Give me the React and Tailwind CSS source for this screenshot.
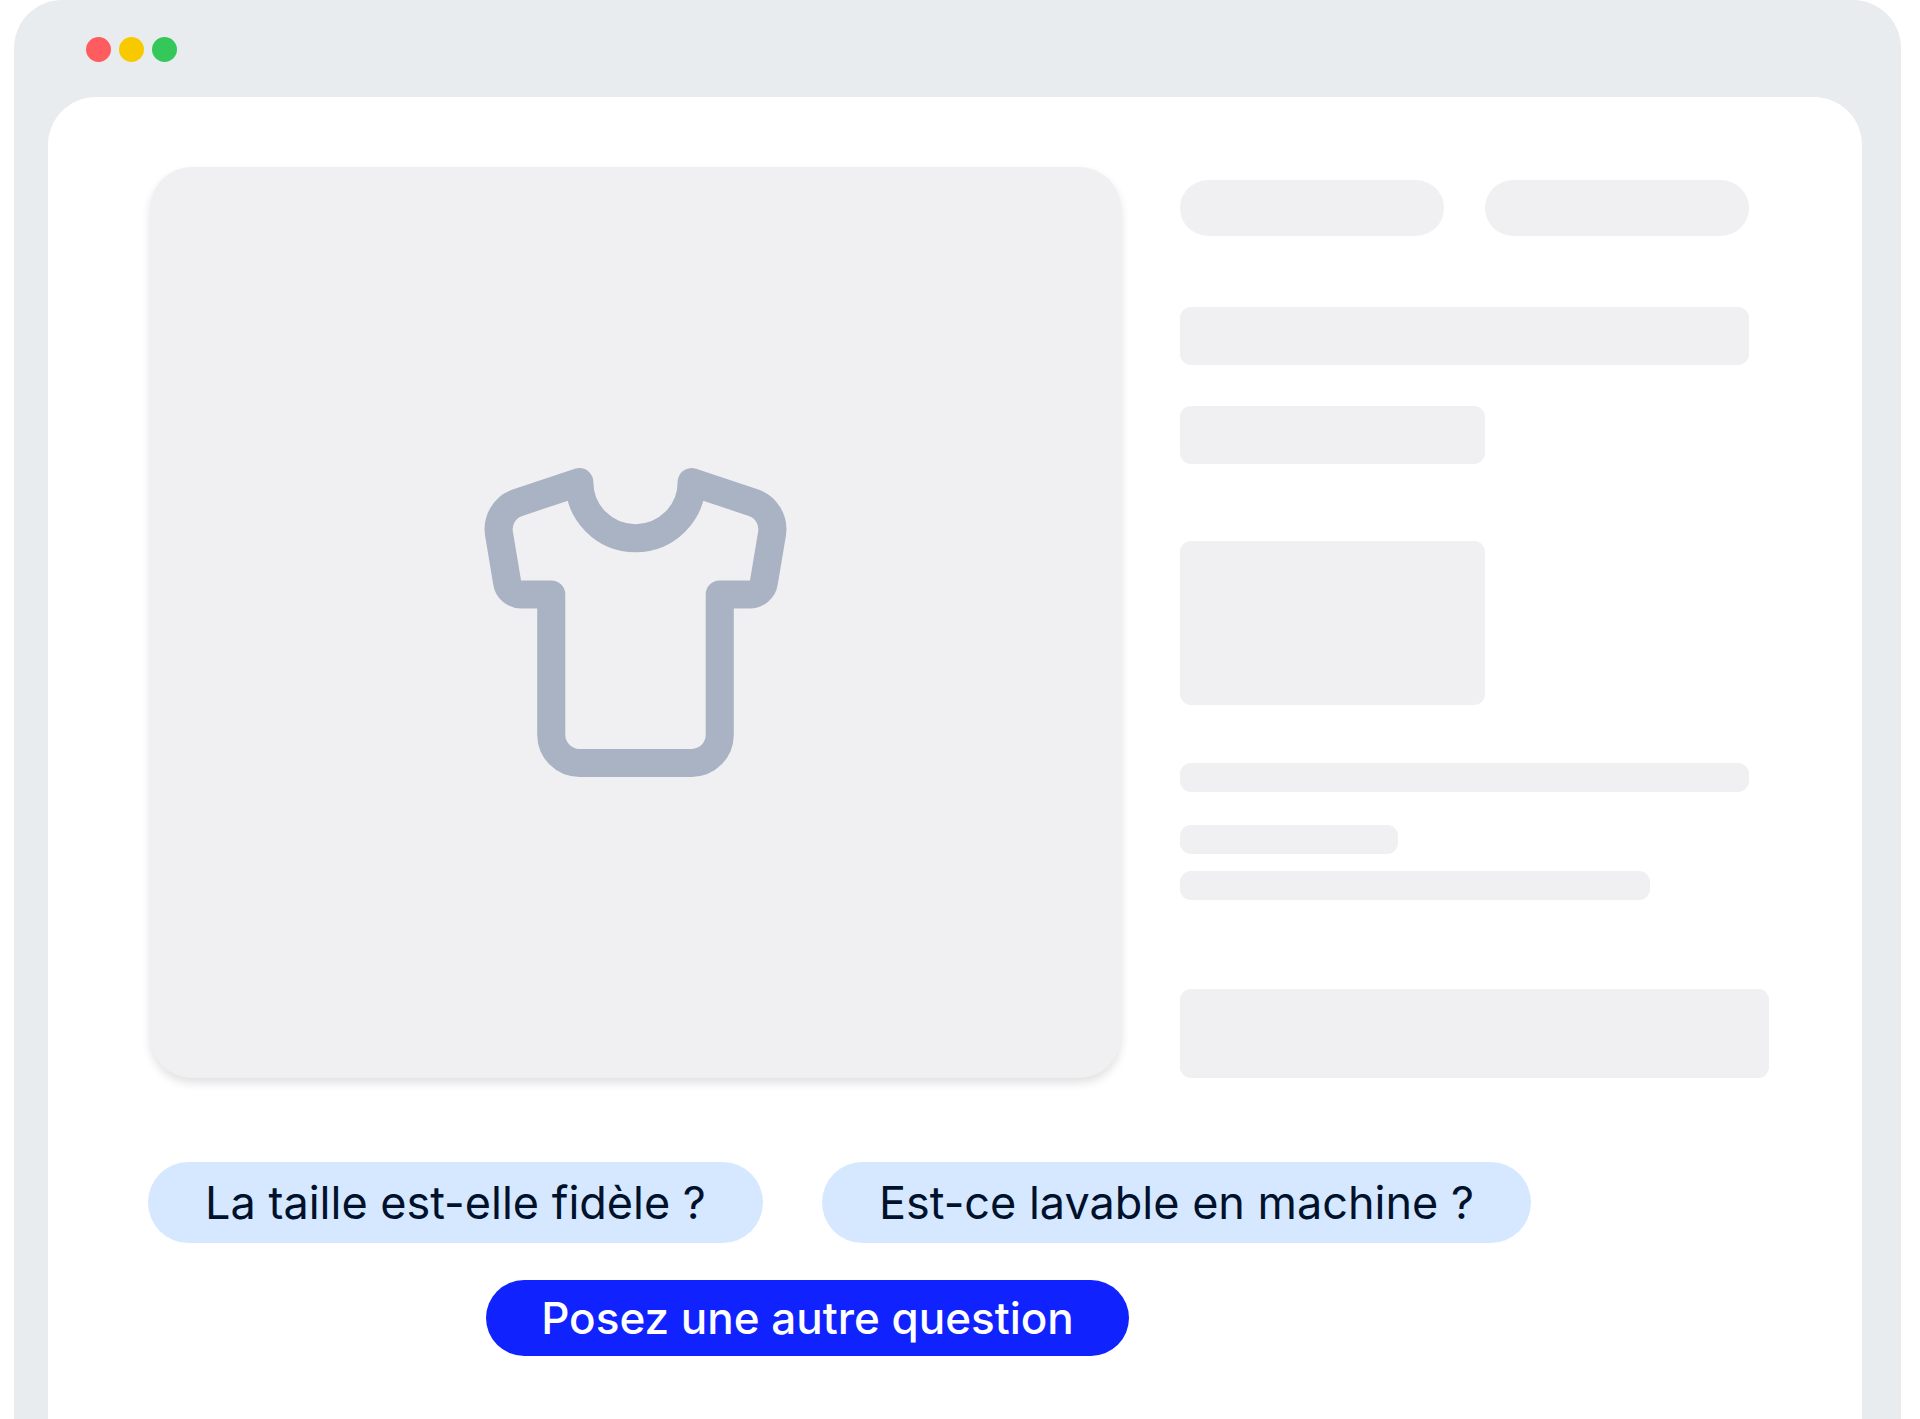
import { Shirt } from 'lucide-react'

const questions = [
  { id: 'taille', label: 'La taille est-elle fidèle ?', width: 'min-w-[615px]' },
  { id: 'lavage', label: 'Est-ce lavable en machine ?', width: 'min-w-[709px]' },
]

function Bar({ className }) {
  return <div className={`max-w-full rounded-[11px] bg-[#f0f0f3] ${className}`} />
}

function WindowDots() {
  return (
    <div className="flex gap-2 pt-[37px] pb-[35px] pl-[38px]">
      <span className="size-[25px] rounded-full bg-[#ff5c5f]" />
      <span className="size-[25px] rounded-full bg-[#f9c900]" />
      <span className="size-[25px] rounded-full bg-[#34c759]" />
    </div>
  )
}

export default function App() {
  return (
    <div className="min-h-screen flex flex-col bg-white pl-[14px] pr-[19px] font-[Inter,'Liberation_Sans',sans-serif]">
      <div className="grow flex flex-col rounded-t-[48px] bg-[#e8ecef] pl-[34px] pr-[39px]">
        <WindowDots />

        <main className="grow rounded-t-[48px] bg-white pt-[70px] pb-[63px] pl-[100px] pr-[93px]">
          <div className="grid grid-cols-[971fr_589fr] gap-[59px] pl-[2px]">
            {/* Visuel produit */}
            <div className="aspect-[971/911] flex items-center justify-center rounded-[42px] bg-[#f0f0f3] shadow-[0_5px_10px_rgba(0,0,0,0.12)]">
              <Shirt size={337} strokeWidth={2} className="text-[#a9b3c3]" />
            </div>

            {/* Fiche produit */}
            <div className="flex flex-col pt-[13px]">
              <div className="flex gap-[41px]">
                <div className="w-[264px] h-14 rounded-full bg-[#f0f0f3]" />
                <div className="w-[264px] h-14 rounded-full bg-[#f0f0f3]" />
              </div>
              <Bar className="mt-[71px] w-[569px] h-[58px]" />
              <Bar className="mt-[41px] w-[305px] h-[58px]" />
              <Bar className="mt-[77px] w-[305px] h-[164px]" />
              <Bar className="mt-[58px] w-[569px] h-[29px]" />
              <Bar className="mt-[33px] w-[218px] h-[29px]" />
              <Bar className="mt-[17px] w-[470px] h-[29px]" />
              <Bar className="mt-auto w-full h-[89px]" />
            </div>
          </div>

          {/* Questions suggérées */}
          <div className="mt-[84px] flex flex-wrap gap-x-[59px] gap-y-6">
            {questions.map(q => (
              <button
                key={q.id}
                className={`h-[81px] px-10 rounded-full bg-[#d6e8ff] text-[45px] text-[#00112c] whitespace-nowrap ${q.width}`}
              >
                {q.label}
              </button>
            ))}
          </div>
          <button className="mt-[37px] ml-[338px] h-[76px] min-w-[643px] px-10 rounded-full bg-[#1023ff] text-[44px] font-medium text-white whitespace-nowrap">
            Posez une autre question
          </button>
        </main>
      </div>
    </div>
  )
}
